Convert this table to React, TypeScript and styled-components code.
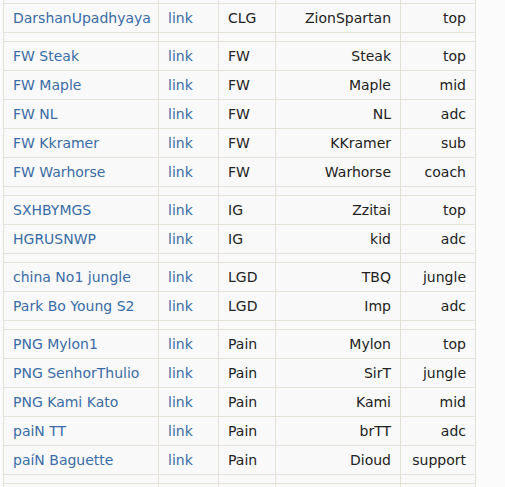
import React from "react";
import styled, { createGlobalStyle } from "styled-components";

const Global = createGlobalStyle`
  html, body { margin: 0; padding: 0; background: #fbfbfb; }
  body { font-family: "DejaVu Sans", Verdana, sans-serif; overflow: hidden; }
`;

const Page = styled.div`
  height: 487px;
  overflow: hidden;
  padding-left: 3px;
`;

const Table = styled.div`
  margin-top: -6px;
  width: 473px;
  box-sizing: border-box;
  display: flex;
  flex-direction: column;
  gap: 1px;
  padding: 1px;
  background: #e3e1d8;
`;

const Row = styled.div<{ $sep?: boolean }>`
  display: grid;
  grid-template-columns: 154px 59px 56px 124px 74px;
  gap: 1px;
  height: ${(p) => (p.$sep ? "8px" : "28px")};
`;

const Cell = styled.div<{ $align?: "left" | "right"; $kind?: "link" | "text" }>`
  background: #f9f9f9;
  display: flex;
  align-items: center;
  justify-content: ${(p) => (p.$align === "right" ? "flex-end" : "flex-start")};
  padding: 0 9px;
  font-size: 14px;
  color: ${(p) => (p.$kind === "link" ? "#3a6ca6" : "#222")};
  white-space: nowrap;
  overflow: hidden;
`;

type Player = [string, string, string, string];

const groups: Player[][] = [
  [["DarshanUpadhyaya", "CLG", "ZionSpartan", "top"]],
  [
    ["FW Steak", "FW", "Steak", "top"],
    ["FW Maple", "FW", "Maple", "mid"],
    ["FW NL", "FW", "NL", "adc"],
    ["FW Kkramer", "FW", "KKramer", "sub"],
    ["FW Warhorse", "FW", "Warhorse", "coach"],
  ],
  [
    ["SXHBYMGS", "IG", "Zzitai", "top"],
    ["HGRUSNWP", "IG", "kid", "adc"],
  ],
  [
    ["china No1 jungle", "LGD", "TBQ", "jungle"],
    ["Park Bo Young S2", "LGD", "Imp", "adc"],
  ],
  [
    ["PNG Mylon1", "Pain", "Mylon", "top"],
    ["PNG SenhorThulio", "Pain", "SirT", "jungle"],
    ["PNG Kami Kato", "Pain", "Kami", "mid"],
    ["paiN TT", "Pain", "brTT", "adc"],
    ["paíN Baguette", "Pain", "Dioud", "support"],
  ],
];

const SepRow = () => (
  <Row $sep>
    <Cell />
    <Cell />
    <Cell />
    <Cell />
    <Cell />
  </Row>
);

export default function App() {
  return (
    <Page>
      <Global />
      <Table>
        <SepRow />
        {groups.map((g, gi) => (
          <React.Fragment key={gi}>
            {g.map(([acc, team, name, role]) => (
              <Row key={acc}>
                <Cell $kind="link">{acc}</Cell>
                <Cell $kind="link">link</Cell>
                <Cell>{team}</Cell>
                <Cell $align="right">{name}</Cell>
                <Cell $align="right">{role}</Cell>
              </Row>
            ))}
            <SepRow />
          </React.Fragment>
        ))}
        <Row>
          <Cell />
          <Cell />
          <Cell />
          <Cell />
          <Cell />
        </Row>
      </Table>
    </Page>
  );
}
